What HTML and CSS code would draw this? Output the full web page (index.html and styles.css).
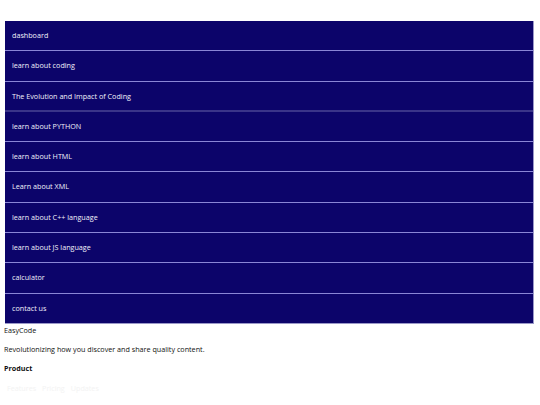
FILE: index.html
```html
<!DOCTYPE html>
<html>
<head>
<meta charset="utf-8">
<link rel="stylesheet" href="styles.css">
</head>
<body>
<nav class="menu">
  <a class="item" href="#">dashboard</a>
  <a class="item" href="#">learn about coding</a>
  <a class="item item-thick" href="#">The Evolution and Impact of Coding</a>
  <a class="item" href="#">learn about PYTHON</a>
  <a class="item" href="#">learn about HTML</a>
  <a class="item" href="#">Learn about XML</a>
  <a class="item" href="#">learn about C++ language</a>
  <a class="item" href="#">learn about JS language</a>
  <a class="item" href="#">calculator</a>
  <a class="item item-last" href="#">contact us</a>
</nav>
<footer class="footer">
  <div class="brand">EasyCode</div>
  <p class="tagline">Revolutionizing how you discover and share quality content.</p>
  <h4 class="heading">Product</h4>
  <div class="links">
    <a href="#">Features</a>
    <a href="#">Pricing</a>
    <a href="#">Updates</a>
  </div>
  <h4 class="heading">Company</h4>
</footer>
</body>
</html>
```
FILE: styles.css
```css
html, body {
  margin: 0;
  padding: 0;
  background: #ffffff;
}
body {
  font-family: "Open Sans", "DejaVu Sans", sans-serif;
  font-size: 7.2px;
  color: #111111;
  padding-left: 4px;
}
.menu {
  display: flex;
  flex-direction: column;
  margin: 21px 6px 0 1px;
  background: #0c046a;
  border-right: 1px solid #9a98c8;
  border-bottom: 1px solid #9a98c8;
}
.item {
  display: block;
  height: 29.3px;
  line-height: 29.3px;
  padding-left: 7px;
  color: #f2f2fa;
  text-decoration: none;
  border-bottom: 1px solid #8a86d6;
}
.item-thick {
  border-bottom: 2px solid #3a3489;
  height: 28.3px;
}
.item-last {
  border-bottom: none;
}
.footer {
  padding-top: 1px;
}
.brand {
  line-height: 11px;
}
.tagline {
  margin: 8px 0 0 0;
  line-height: 11px;
}
.heading {
  margin: 8px 0 0 0;
  font-size: 7.2px;
  font-weight: 700;
  line-height: 11px;
}
.links {
  display: flex;
  gap: 6px;
  margin: 9px 0 0 3px;
  line-height: 11px;
}
.links a {
  color: #f3f3f3;
  text-decoration: none;
}
.links + .heading {
  margin-top: 8px;
}
```
